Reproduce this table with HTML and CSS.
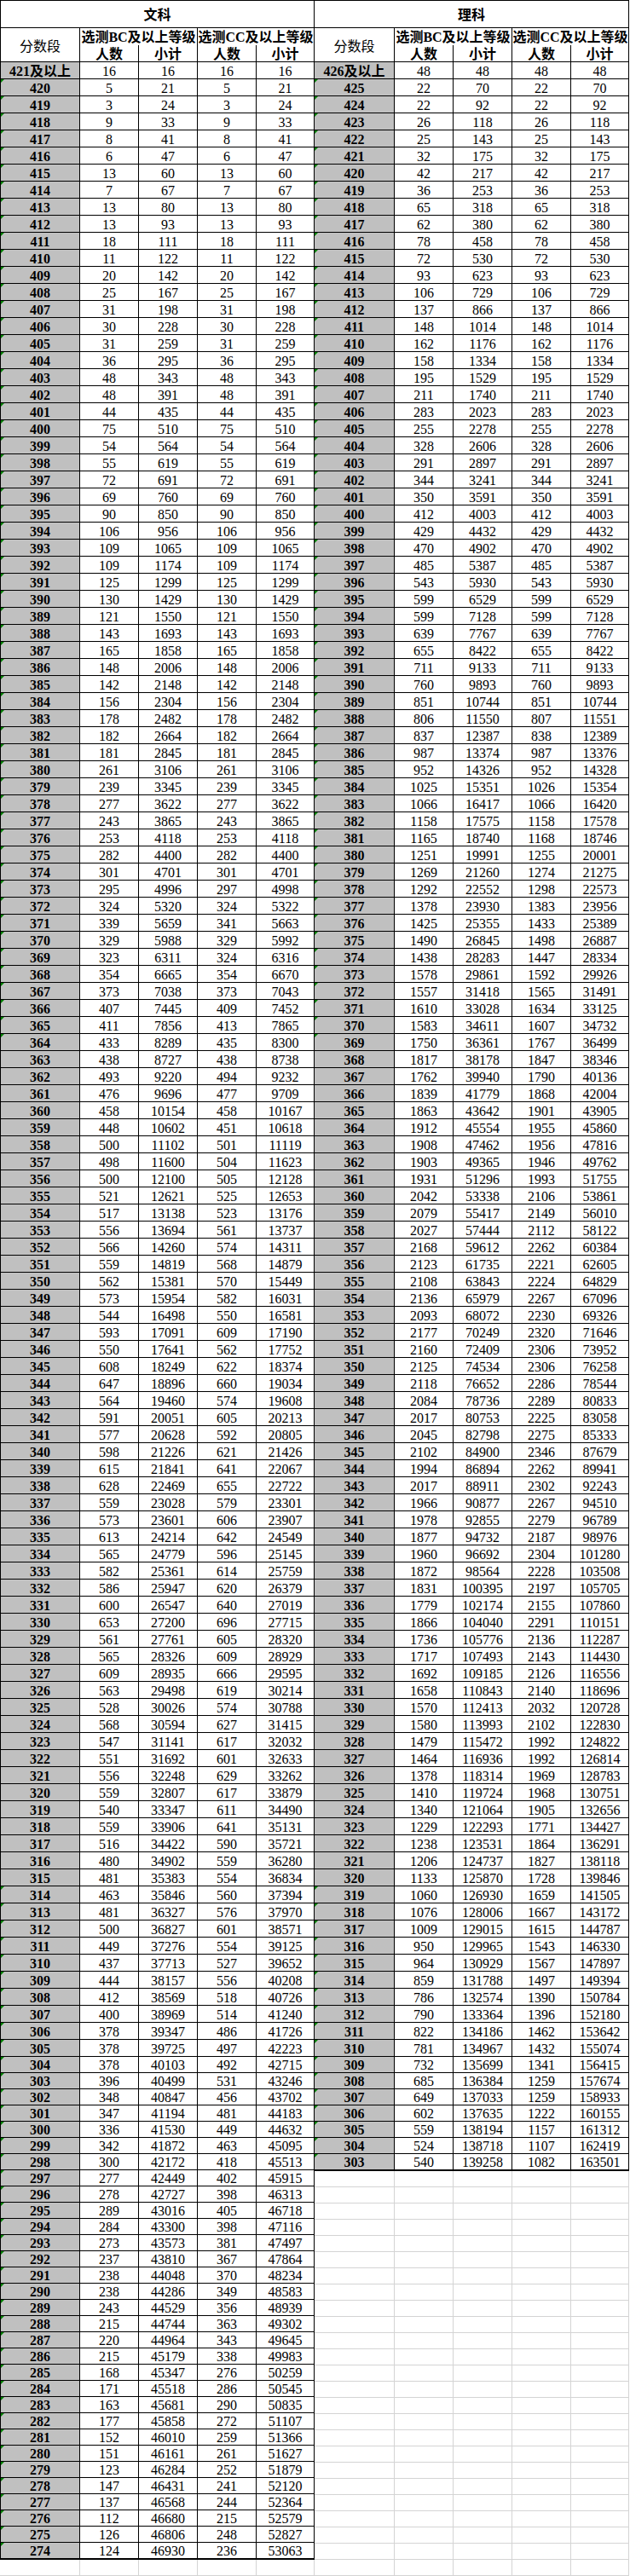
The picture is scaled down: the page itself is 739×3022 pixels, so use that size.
FILE: index.html
```html
<!DOCTYPE html>
<html lang="zh-CN">
<head>
<meta charset="utf-8">
<title>分数段统计</title>
<link rel="stylesheet" href="styles.css">
</head>
<body>
<div class="sheet">
<div class="half">
<table class="tbl tbl-left">
<colgroup><col class="c1"><col class="c2"><col class="c3"><col class="c4"><col class="c5"></colgroup>
<thead>
<tr><th class="title" colspan="5">文科</th></tr>
<tr><th class="seg" rowspan="2">分数段</th><th class="grp" colspan="2">选测BC及以上等级</th><th class="grp" colspan="2">选测CC及以上等级</th></tr>
<tr><th class="sub">人数</th><th class="sub">小计</th><th class="sub">人数</th><th class="sub">小计</th></tr>
</thead>
<tbody>
<tr><td class="l">421及以上</td><td>16</td><td>16</td><td>16</td><td>16</td></tr>
<tr><td class="l t">420</td><td>5</td><td>21</td><td>5</td><td>21</td></tr>
<tr><td class="l t">419</td><td>3</td><td>24</td><td>3</td><td>24</td></tr>
<tr><td class="l t">418</td><td>9</td><td>33</td><td>9</td><td>33</td></tr>
<tr><td class="l t">417</td><td>8</td><td>41</td><td>8</td><td>41</td></tr>
<tr><td class="l t">416</td><td>6</td><td>47</td><td>6</td><td>47</td></tr>
<tr><td class="l t">415</td><td>13</td><td>60</td><td>13</td><td>60</td></tr>
<tr><td class="l t">414</td><td>7</td><td>67</td><td>7</td><td>67</td></tr>
<tr><td class="l t">413</td><td>13</td><td>80</td><td>13</td><td>80</td></tr>
<tr><td class="l t">412</td><td>13</td><td>93</td><td>13</td><td>93</td></tr>
<tr><td class="l t">411</td><td>18</td><td>111</td><td>18</td><td>111</td></tr>
<tr><td class="l t">410</td><td>11</td><td>122</td><td>11</td><td>122</td></tr>
<tr><td class="l t">409</td><td>20</td><td>142</td><td>20</td><td>142</td></tr>
<tr><td class="l t">408</td><td>25</td><td>167</td><td>25</td><td>167</td></tr>
<tr><td class="l t">407</td><td>31</td><td>198</td><td>31</td><td>198</td></tr>
<tr><td class="l t">406</td><td>30</td><td>228</td><td>30</td><td>228</td></tr>
<tr><td class="l t">405</td><td>31</td><td>259</td><td>31</td><td>259</td></tr>
<tr><td class="l t">404</td><td>36</td><td>295</td><td>36</td><td>295</td></tr>
<tr><td class="l t">403</td><td>48</td><td>343</td><td>48</td><td>343</td></tr>
<tr><td class="l t">402</td><td>48</td><td>391</td><td>48</td><td>391</td></tr>
<tr><td class="l t">401</td><td>44</td><td>435</td><td>44</td><td>435</td></tr>
<tr><td class="l t">400</td><td>75</td><td>510</td><td>75</td><td>510</td></tr>
<tr><td class="l t">399</td><td>54</td><td>564</td><td>54</td><td>564</td></tr>
<tr><td class="l t">398</td><td>55</td><td>619</td><td>55</td><td>619</td></tr>
<tr><td class="l t">397</td><td>72</td><td>691</td><td>72</td><td>691</td></tr>
<tr><td class="l t">396</td><td>69</td><td>760</td><td>69</td><td>760</td></tr>
<tr><td class="l t">395</td><td>90</td><td>850</td><td>90</td><td>850</td></tr>
<tr><td class="l t">394</td><td>106</td><td>956</td><td>106</td><td>956</td></tr>
<tr><td class="l t">393</td><td>109</td><td>1065</td><td>109</td><td>1065</td></tr>
<tr><td class="l t">392</td><td>109</td><td>1174</td><td>109</td><td>1174</td></tr>
<tr><td class="l t">391</td><td>125</td><td>1299</td><td>125</td><td>1299</td></tr>
<tr><td class="l t">390</td><td>130</td><td>1429</td><td>130</td><td>1429</td></tr>
<tr><td class="l t">389</td><td>121</td><td>1550</td><td>121</td><td>1550</td></tr>
<tr><td class="l t">388</td><td>143</td><td>1693</td><td>143</td><td>1693</td></tr>
<tr><td class="l t">387</td><td>165</td><td>1858</td><td>165</td><td>1858</td></tr>
<tr><td class="l t">386</td><td>148</td><td>2006</td><td>148</td><td>2006</td></tr>
<tr><td class="l t">385</td><td>142</td><td>2148</td><td>142</td><td>2148</td></tr>
<tr><td class="l t">384</td><td>156</td><td>2304</td><td>156</td><td>2304</td></tr>
<tr><td class="l t">383</td><td>178</td><td>2482</td><td>178</td><td>2482</td></tr>
<tr><td class="l t">382</td><td>182</td><td>2664</td><td>182</td><td>2664</td></tr>
<tr><td class="l t">381</td><td>181</td><td>2845</td><td>181</td><td>2845</td></tr>
<tr><td class="l t">380</td><td>261</td><td>3106</td><td>261</td><td>3106</td></tr>
<tr><td class="l t">379</td><td>239</td><td>3345</td><td>239</td><td>3345</td></tr>
<tr><td class="l t">378</td><td>277</td><td>3622</td><td>277</td><td>3622</td></tr>
<tr><td class="l t">377</td><td>243</td><td>3865</td><td>243</td><td>3865</td></tr>
<tr><td class="l t">376</td><td>253</td><td>4118</td><td>253</td><td>4118</td></tr>
<tr><td class="l t">375</td><td>282</td><td>4400</td><td>282</td><td>4400</td></tr>
<tr><td class="l t">374</td><td>301</td><td>4701</td><td>301</td><td>4701</td></tr>
<tr><td class="l t">373</td><td>295</td><td>4996</td><td>297</td><td>4998</td></tr>
<tr><td class="l t">372</td><td>324</td><td>5320</td><td>324</td><td>5322</td></tr>
<tr><td class="l t">371</td><td>339</td><td>5659</td><td>341</td><td>5663</td></tr>
<tr><td class="l t">370</td><td>329</td><td>5988</td><td>329</td><td>5992</td></tr>
<tr><td class="l t">369</td><td>323</td><td>6311</td><td>324</td><td>6316</td></tr>
<tr><td class="l t">368</td><td>354</td><td>6665</td><td>354</td><td>6670</td></tr>
<tr><td class="l t">367</td><td>373</td><td>7038</td><td>373</td><td>7043</td></tr>
<tr><td class="l t">366</td><td>407</td><td>7445</td><td>409</td><td>7452</td></tr>
<tr><td class="l t">365</td><td>411</td><td>7856</td><td>413</td><td>7865</td></tr>
<tr><td class="l t">364</td><td>433</td><td>8289</td><td>435</td><td>8300</td></tr>
<tr><td class="l">363</td><td>438</td><td>8727</td><td>438</td><td>8738</td></tr>
<tr><td class="l">362</td><td>493</td><td>9220</td><td>494</td><td>9232</td></tr>
<tr><td class="l">361</td><td>476</td><td>9696</td><td>477</td><td>9709</td></tr>
<tr><td class="l">360</td><td>458</td><td>10154</td><td>458</td><td>10167</td></tr>
<tr><td class="l">359</td><td>448</td><td>10602</td><td>451</td><td>10618</td></tr>
<tr><td class="l">358</td><td>500</td><td>11102</td><td>501</td><td>11119</td></tr>
<tr><td class="l">357</td><td>498</td><td>11600</td><td>504</td><td>11623</td></tr>
<tr><td class="l">356</td><td>500</td><td>12100</td><td>505</td><td>12128</td></tr>
<tr><td class="l">355</td><td>521</td><td>12621</td><td>525</td><td>12653</td></tr>
<tr><td class="l">354</td><td>517</td><td>13138</td><td>523</td><td>13176</td></tr>
<tr><td class="l">353</td><td>556</td><td>13694</td><td>561</td><td>13737</td></tr>
<tr><td class="l">352</td><td>566</td><td>14260</td><td>574</td><td>14311</td></tr>
<tr><td class="l">351</td><td>559</td><td>14819</td><td>568</td><td>14879</td></tr>
<tr><td class="l">350</td><td>562</td><td>15381</td><td>570</td><td>15449</td></tr>
<tr><td class="l">349</td><td>573</td><td>15954</td><td>582</td><td>16031</td></tr>
<tr><td class="l">348</td><td>544</td><td>16498</td><td>550</td><td>16581</td></tr>
<tr><td class="l">347</td><td>593</td><td>17091</td><td>609</td><td>17190</td></tr>
<tr><td class="l">346</td><td>550</td><td>17641</td><td>562</td><td>17752</td></tr>
<tr><td class="l">345</td><td>608</td><td>18249</td><td>622</td><td>18374</td></tr>
<tr><td class="l">344</td><td>647</td><td>18896</td><td>660</td><td>19034</td></tr>
<tr><td class="l">343</td><td>564</td><td>19460</td><td>574</td><td>19608</td></tr>
<tr><td class="l">342</td><td>591</td><td>20051</td><td>605</td><td>20213</td></tr>
<tr><td class="l">341</td><td>577</td><td>20628</td><td>592</td><td>20805</td></tr>
<tr><td class="l">340</td><td>598</td><td>21226</td><td>621</td><td>21426</td></tr>
<tr><td class="l">339</td><td>615</td><td>21841</td><td>641</td><td>22067</td></tr>
<tr><td class="l">338</td><td>628</td><td>22469</td><td>655</td><td>22722</td></tr>
<tr><td class="l">337</td><td>559</td><td>23028</td><td>579</td><td>23301</td></tr>
<tr><td class="l">336</td><td>573</td><td>23601</td><td>606</td><td>23907</td></tr>
<tr><td class="l">335</td><td>613</td><td>24214</td><td>642</td><td>24549</td></tr>
<tr><td class="l">334</td><td>565</td><td>24779</td><td>596</td><td>25145</td></tr>
<tr><td class="l">333</td><td>582</td><td>25361</td><td>614</td><td>25759</td></tr>
<tr><td class="l">332</td><td>586</td><td>25947</td><td>620</td><td>26379</td></tr>
<tr><td class="l">331</td><td>600</td><td>26547</td><td>640</td><td>27019</td></tr>
<tr><td class="l">330</td><td>653</td><td>27200</td><td>696</td><td>27715</td></tr>
<tr><td class="l">329</td><td>561</td><td>27761</td><td>605</td><td>28320</td></tr>
<tr><td class="l">328</td><td>565</td><td>28326</td><td>609</td><td>28929</td></tr>
<tr><td class="l">327</td><td>609</td><td>28935</td><td>666</td><td>29595</td></tr>
<tr><td class="l">326</td><td>563</td><td>29498</td><td>619</td><td>30214</td></tr>
<tr><td class="l">325</td><td>528</td><td>30026</td><td>574</td><td>30788</td></tr>
<tr><td class="l">324</td><td>568</td><td>30594</td><td>627</td><td>31415</td></tr>
<tr><td class="l">323</td><td>547</td><td>31141</td><td>617</td><td>32032</td></tr>
<tr><td class="l">322</td><td>551</td><td>31692</td><td>601</td><td>32633</td></tr>
<tr><td class="l">321</td><td>556</td><td>32248</td><td>629</td><td>33262</td></tr>
<tr><td class="l">320</td><td>559</td><td>32807</td><td>617</td><td>33879</td></tr>
<tr><td class="l">319</td><td>540</td><td>33347</td><td>611</td><td>34490</td></tr>
<tr><td class="l">318</td><td>559</td><td>33906</td><td>641</td><td>35131</td></tr>
<tr><td class="l">317</td><td>516</td><td>34422</td><td>590</td><td>35721</td></tr>
<tr><td class="l">316</td><td>480</td><td>34902</td><td>559</td><td>36280</td></tr>
<tr><td class="l">315</td><td>481</td><td>35383</td><td>554</td><td>36834</td></tr>
<tr><td class="l t">314</td><td>463</td><td>35846</td><td>560</td><td>37394</td></tr>
<tr><td class="l t">313</td><td>481</td><td>36327</td><td>576</td><td>37970</td></tr>
<tr><td class="l t">312</td><td>500</td><td>36827</td><td>601</td><td>38571</td></tr>
<tr><td class="l t">311</td><td>449</td><td>37276</td><td>554</td><td>39125</td></tr>
<tr><td class="l t">310</td><td>437</td><td>37713</td><td>527</td><td>39652</td></tr>
<tr><td class="l t">309</td><td>444</td><td>38157</td><td>556</td><td>40208</td></tr>
<tr><td class="l t">308</td><td>412</td><td>38569</td><td>518</td><td>40726</td></tr>
<tr><td class="l t">307</td><td>400</td><td>38969</td><td>514</td><td>41240</td></tr>
<tr><td class="l t">306</td><td>378</td><td>39347</td><td>486</td><td>41726</td></tr>
<tr><td class="l t">305</td><td>378</td><td>39725</td><td>497</td><td>42223</td></tr>
<tr class="s"><td class="l t">304</td><td>378</td><td>40103</td><td>492</td><td>42715</td></tr>
<tr class="s"><td class="l t">303</td><td>396</td><td>40499</td><td>531</td><td>43246</td></tr>
<tr class="s"><td class="l t">302</td><td>348</td><td>40847</td><td>456</td><td>43702</td></tr>
<tr class="s"><td class="l t">301</td><td>347</td><td>41194</td><td>481</td><td>44183</td></tr>
<tr class="s"><td class="l t">300</td><td>336</td><td>41530</td><td>449</td><td>44632</td></tr>
<tr class="s"><td class="l t">299</td><td>342</td><td>41872</td><td>463</td><td>45095</td></tr>
<tr class="s"><td class="l t">298</td><td>300</td><td>42172</td><td>418</td><td>45513</td></tr>
<tr class="s"><td class="l t">297</td><td>277</td><td>42449</td><td>402</td><td>45915</td></tr>
<tr class="s"><td class="l t">296</td><td>278</td><td>42727</td><td>398</td><td>46313</td></tr>
<tr class="s"><td class="l t">295</td><td>289</td><td>43016</td><td>405</td><td>46718</td></tr>
<tr class="s"><td class="l t">294</td><td>284</td><td>43300</td><td>398</td><td>47116</td></tr>
<tr class="s"><td class="l t">293</td><td>273</td><td>43573</td><td>381</td><td>47497</td></tr>
<tr class="s"><td class="l t">292</td><td>237</td><td>43810</td><td>367</td><td>47864</td></tr>
<tr class="s"><td class="l t">291</td><td>238</td><td>44048</td><td>370</td><td>48234</td></tr>
<tr class="s"><td class="l t">290</td><td>238</td><td>44286</td><td>349</td><td>48583</td></tr>
<tr class="s"><td class="l t">289</td><td>243</td><td>44529</td><td>356</td><td>48939</td></tr>
<tr class="s"><td class="l t">288</td><td>215</td><td>44744</td><td>363</td><td>49302</td></tr>
<tr class="s"><td class="l t">287</td><td>220</td><td>44964</td><td>343</td><td>49645</td></tr>
<tr class="s"><td class="l t">286</td><td>215</td><td>45179</td><td>338</td><td>49983</td></tr>
<tr class="s"><td class="l t">285</td><td>168</td><td>45347</td><td>276</td><td>50259</td></tr>
<tr class="s"><td class="l t">284</td><td>171</td><td>45518</td><td>286</td><td>50545</td></tr>
<tr class="s"><td class="l t">283</td><td>163</td><td>45681</td><td>290</td><td>50835</td></tr>
<tr class="s"><td class="l t">282</td><td>177</td><td>45858</td><td>272</td><td>51107</td></tr>
<tr class="s"><td class="l t">281</td><td>152</td><td>46010</td><td>259</td><td>51366</td></tr>
<tr class="s"><td class="l t">280</td><td>151</td><td>46161</td><td>261</td><td>51627</td></tr>
<tr class="s"><td class="l t">279</td><td>123</td><td>46284</td><td>252</td><td>51879</td></tr>
<tr class="s"><td class="l t">278</td><td>147</td><td>46431</td><td>241</td><td>52120</td></tr>
<tr class="s"><td class="l t">277</td><td>137</td><td>46568</td><td>244</td><td>52364</td></tr>
<tr class="s"><td class="l t">276</td><td>112</td><td>46680</td><td>215</td><td>52579</td></tr>
<tr class="s"><td class="l t">275</td><td>126</td><td>46806</td><td>248</td><td>52827</td></tr>
<tr class="e"><td class="l t">274</td><td>124</td><td>46930</td><td>236</td><td>53063</td></tr>
</tbody>
</table>
<div class="blank"></div>
</div>
<div class="half">
<table class="tbl tbl-right">
<colgroup><col class="c1"><col class="c2"><col class="c3"><col class="c4"><col class="c5"></colgroup>
<thead>
<tr><th class="title" colspan="5">理科</th></tr>
<tr><th class="seg" rowspan="2">分数段</th><th class="grp" colspan="2">选测BC及以上等级</th><th class="grp" colspan="2">选测CC及以上等级</th></tr>
<tr><th class="sub">人数</th><th class="sub">小计</th><th class="sub">人数</th><th class="sub">小计</th></tr>
</thead>
<tbody>
<tr><td class="l">426及以上</td><td>48</td><td>48</td><td>48</td><td>48</td></tr>
<tr><td class="l t">425</td><td>22</td><td>70</td><td>22</td><td>70</td></tr>
<tr><td class="l t">424</td><td>22</td><td>92</td><td>22</td><td>92</td></tr>
<tr><td class="l t">423</td><td>26</td><td>118</td><td>26</td><td>118</td></tr>
<tr><td class="l t">422</td><td>25</td><td>143</td><td>25</td><td>143</td></tr>
<tr><td class="l t">421</td><td>32</td><td>175</td><td>32</td><td>175</td></tr>
<tr><td class="l t">420</td><td>42</td><td>217</td><td>42</td><td>217</td></tr>
<tr><td class="l t">419</td><td>36</td><td>253</td><td>36</td><td>253</td></tr>
<tr><td class="l t">418</td><td>65</td><td>318</td><td>65</td><td>318</td></tr>
<tr><td class="l t">417</td><td>62</td><td>380</td><td>62</td><td>380</td></tr>
<tr><td class="l t">416</td><td>78</td><td>458</td><td>78</td><td>458</td></tr>
<tr><td class="l t">415</td><td>72</td><td>530</td><td>72</td><td>530</td></tr>
<tr><td class="l t">414</td><td>93</td><td>623</td><td>93</td><td>623</td></tr>
<tr><td class="l t">413</td><td>106</td><td>729</td><td>106</td><td>729</td></tr>
<tr><td class="l t">412</td><td>137</td><td>866</td><td>137</td><td>866</td></tr>
<tr><td class="l t">411</td><td>148</td><td>1014</td><td>148</td><td>1014</td></tr>
<tr><td class="l t">410</td><td>162</td><td>1176</td><td>162</td><td>1176</td></tr>
<tr><td class="l t">409</td><td>158</td><td>1334</td><td>158</td><td>1334</td></tr>
<tr><td class="l t">408</td><td>195</td><td>1529</td><td>195</td><td>1529</td></tr>
<tr><td class="l t">407</td><td>211</td><td>1740</td><td>211</td><td>1740</td></tr>
<tr><td class="l t">406</td><td>283</td><td>2023</td><td>283</td><td>2023</td></tr>
<tr><td class="l t">405</td><td>255</td><td>2278</td><td>255</td><td>2278</td></tr>
<tr><td class="l t">404</td><td>328</td><td>2606</td><td>328</td><td>2606</td></tr>
<tr><td class="l t">403</td><td>291</td><td>2897</td><td>291</td><td>2897</td></tr>
<tr><td class="l t">402</td><td>344</td><td>3241</td><td>344</td><td>3241</td></tr>
<tr><td class="l t">401</td><td>350</td><td>3591</td><td>350</td><td>3591</td></tr>
<tr><td class="l t">400</td><td>412</td><td>4003</td><td>412</td><td>4003</td></tr>
<tr><td class="l t">399</td><td>429</td><td>4432</td><td>429</td><td>4432</td></tr>
<tr><td class="l t">398</td><td>470</td><td>4902</td><td>470</td><td>4902</td></tr>
<tr><td class="l t">397</td><td>485</td><td>5387</td><td>485</td><td>5387</td></tr>
<tr><td class="l t">396</td><td>543</td><td>5930</td><td>543</td><td>5930</td></tr>
<tr><td class="l t">395</td><td>599</td><td>6529</td><td>599</td><td>6529</td></tr>
<tr><td class="l t">394</td><td>599</td><td>7128</td><td>599</td><td>7128</td></tr>
<tr><td class="l t">393</td><td>639</td><td>7767</td><td>639</td><td>7767</td></tr>
<tr><td class="l t">392</td><td>655</td><td>8422</td><td>655</td><td>8422</td></tr>
<tr><td class="l t">391</td><td>711</td><td>9133</td><td>711</td><td>9133</td></tr>
<tr><td class="l t">390</td><td>760</td><td>9893</td><td>760</td><td>9893</td></tr>
<tr><td class="l t">389</td><td>851</td><td>10744</td><td>851</td><td>10744</td></tr>
<tr><td class="l t">388</td><td>806</td><td>11550</td><td>807</td><td>11551</td></tr>
<tr><td class="l t">387</td><td>837</td><td>12387</td><td>838</td><td>12389</td></tr>
<tr><td class="l t">386</td><td>987</td><td>13374</td><td>987</td><td>13376</td></tr>
<tr><td class="l t">385</td><td>952</td><td>14326</td><td>952</td><td>14328</td></tr>
<tr><td class="l t">384</td><td>1025</td><td>15351</td><td>1026</td><td>15354</td></tr>
<tr><td class="l t">383</td><td>1066</td><td>16417</td><td>1066</td><td>16420</td></tr>
<tr><td class="l t">382</td><td>1158</td><td>17575</td><td>1158</td><td>17578</td></tr>
<tr><td class="l t">381</td><td>1165</td><td>18740</td><td>1168</td><td>18746</td></tr>
<tr><td class="l t">380</td><td>1251</td><td>19991</td><td>1255</td><td>20001</td></tr>
<tr><td class="l t">379</td><td>1269</td><td>21260</td><td>1274</td><td>21275</td></tr>
<tr><td class="l t">378</td><td>1292</td><td>22552</td><td>1298</td><td>22573</td></tr>
<tr><td class="l t">377</td><td>1378</td><td>23930</td><td>1383</td><td>23956</td></tr>
<tr><td class="l t">376</td><td>1425</td><td>25355</td><td>1433</td><td>25389</td></tr>
<tr><td class="l t">375</td><td>1490</td><td>26845</td><td>1498</td><td>26887</td></tr>
<tr><td class="l t">374</td><td>1438</td><td>28283</td><td>1447</td><td>28334</td></tr>
<tr><td class="l t">373</td><td>1578</td><td>29861</td><td>1592</td><td>29926</td></tr>
<tr><td class="l t">372</td><td>1557</td><td>31418</td><td>1565</td><td>31491</td></tr>
<tr><td class="l t">371</td><td>1610</td><td>33028</td><td>1634</td><td>33125</td></tr>
<tr><td class="l t">370</td><td>1583</td><td>34611</td><td>1607</td><td>34732</td></tr>
<tr><td class="l t">369</td><td>1750</td><td>36361</td><td>1767</td><td>36499</td></tr>
<tr><td class="l">368</td><td>1817</td><td>38178</td><td>1847</td><td>38346</td></tr>
<tr><td class="l">367</td><td>1762</td><td>39940</td><td>1790</td><td>40136</td></tr>
<tr><td class="l">366</td><td>1839</td><td>41779</td><td>1868</td><td>42004</td></tr>
<tr><td class="l">365</td><td>1863</td><td>43642</td><td>1901</td><td>43905</td></tr>
<tr><td class="l">364</td><td>1912</td><td>45554</td><td>1955</td><td>45860</td></tr>
<tr><td class="l">363</td><td>1908</td><td>47462</td><td>1956</td><td>47816</td></tr>
<tr><td class="l">362</td><td>1903</td><td>49365</td><td>1946</td><td>49762</td></tr>
<tr><td class="l">361</td><td>1931</td><td>51296</td><td>1993</td><td>51755</td></tr>
<tr><td class="l">360</td><td>2042</td><td>53338</td><td>2106</td><td>53861</td></tr>
<tr><td class="l">359</td><td>2079</td><td>55417</td><td>2149</td><td>56010</td></tr>
<tr><td class="l">358</td><td>2027</td><td>57444</td><td>2112</td><td>58122</td></tr>
<tr><td class="l">357</td><td>2168</td><td>59612</td><td>2262</td><td>60384</td></tr>
<tr><td class="l">356</td><td>2123</td><td>61735</td><td>2221</td><td>62605</td></tr>
<tr><td class="l">355</td><td>2108</td><td>63843</td><td>2224</td><td>64829</td></tr>
<tr><td class="l">354</td><td>2136</td><td>65979</td><td>2267</td><td>67096</td></tr>
<tr><td class="l">353</td><td>2093</td><td>68072</td><td>2230</td><td>69326</td></tr>
<tr><td class="l">352</td><td>2177</td><td>70249</td><td>2320</td><td>71646</td></tr>
<tr><td class="l">351</td><td>2160</td><td>72409</td><td>2306</td><td>73952</td></tr>
<tr><td class="l">350</td><td>2125</td><td>74534</td><td>2306</td><td>76258</td></tr>
<tr><td class="l">349</td><td>2118</td><td>76652</td><td>2286</td><td>78544</td></tr>
<tr><td class="l">348</td><td>2084</td><td>78736</td><td>2289</td><td>80833</td></tr>
<tr><td class="l">347</td><td>2017</td><td>80753</td><td>2225</td><td>83058</td></tr>
<tr><td class="l">346</td><td>2045</td><td>82798</td><td>2275</td><td>85333</td></tr>
<tr><td class="l">345</td><td>2102</td><td>84900</td><td>2346</td><td>87679</td></tr>
<tr><td class="l">344</td><td>1994</td><td>86894</td><td>2262</td><td>89941</td></tr>
<tr><td class="l">343</td><td>2017</td><td>88911</td><td>2302</td><td>92243</td></tr>
<tr><td class="l">342</td><td>1966</td><td>90877</td><td>2267</td><td>94510</td></tr>
<tr><td class="l">341</td><td>1978</td><td>92855</td><td>2279</td><td>96789</td></tr>
<tr><td class="l">340</td><td>1877</td><td>94732</td><td>2187</td><td>98976</td></tr>
<tr><td class="l">339</td><td>1960</td><td>96692</td><td>2304</td><td>101280</td></tr>
<tr><td class="l">338</td><td>1872</td><td>98564</td><td>2228</td><td>103508</td></tr>
<tr><td class="l">337</td><td>1831</td><td>100395</td><td>2197</td><td>105705</td></tr>
<tr><td class="l">336</td><td>1779</td><td>102174</td><td>2155</td><td>107860</td></tr>
<tr><td class="l">335</td><td>1866</td><td>104040</td><td>2291</td><td>110151</td></tr>
<tr><td class="l">334</td><td>1736</td><td>105776</td><td>2136</td><td>112287</td></tr>
<tr><td class="l">333</td><td>1717</td><td>107493</td><td>2143</td><td>114430</td></tr>
<tr><td class="l">332</td><td>1692</td><td>109185</td><td>2126</td><td>116556</td></tr>
<tr><td class="l">331</td><td>1658</td><td>110843</td><td>2140</td><td>118696</td></tr>
<tr><td class="l">330</td><td>1570</td><td>112413</td><td>2032</td><td>120728</td></tr>
<tr><td class="l">329</td><td>1580</td><td>113993</td><td>2102</td><td>122830</td></tr>
<tr><td class="l">328</td><td>1479</td><td>115472</td><td>1992</td><td>124822</td></tr>
<tr><td class="l">327</td><td>1464</td><td>116936</td><td>1992</td><td>126814</td></tr>
<tr><td class="l">326</td><td>1378</td><td>118314</td><td>1969</td><td>128783</td></tr>
<tr><td class="l">325</td><td>1410</td><td>119724</td><td>1968</td><td>130751</td></tr>
<tr><td class="l">324</td><td>1340</td><td>121064</td><td>1905</td><td>132656</td></tr>
<tr><td class="l">323</td><td>1229</td><td>122293</td><td>1771</td><td>134427</td></tr>
<tr><td class="l">322</td><td>1238</td><td>123531</td><td>1864</td><td>136291</td></tr>
<tr><td class="l">321</td><td>1206</td><td>124737</td><td>1827</td><td>138118</td></tr>
<tr><td class="l">320</td><td>1133</td><td>125870</td><td>1728</td><td>139846</td></tr>
<tr><td class="l t">319</td><td>1060</td><td>126930</td><td>1659</td><td>141505</td></tr>
<tr><td class="l t">318</td><td>1076</td><td>128006</td><td>1667</td><td>143172</td></tr>
<tr><td class="l t">317</td><td>1009</td><td>129015</td><td>1615</td><td>144787</td></tr>
<tr><td class="l t">316</td><td>950</td><td>129965</td><td>1543</td><td>146330</td></tr>
<tr><td class="l t">315</td><td>964</td><td>130929</td><td>1567</td><td>147897</td></tr>
<tr><td class="l t">314</td><td>859</td><td>131788</td><td>1497</td><td>149394</td></tr>
<tr><td class="l t">313</td><td>786</td><td>132574</td><td>1390</td><td>150784</td></tr>
<tr><td class="l t">312</td><td>790</td><td>133364</td><td>1396</td><td>152180</td></tr>
<tr><td class="l t">311</td><td>822</td><td>134186</td><td>1462</td><td>153642</td></tr>
<tr><td class="l t">310</td><td>781</td><td>134967</td><td>1432</td><td>155074</td></tr>
<tr class="s"><td class="l t">309</td><td>732</td><td>135699</td><td>1341</td><td>156415</td></tr>
<tr class="s"><td class="l t">308</td><td>685</td><td>136384</td><td>1259</td><td>157674</td></tr>
<tr class="s"><td class="l t">307</td><td>649</td><td>137033</td><td>1259</td><td>158933</td></tr>
<tr class="s"><td class="l t">306</td><td>602</td><td>137635</td><td>1222</td><td>160155</td></tr>
<tr class="s"><td class="l t">305</td><td>559</td><td>138194</td><td>1157</td><td>161312</td></tr>
<tr class="s"><td class="l t">304</td><td>524</td><td>138718</td><td>1107</td><td>162419</td></tr>
<tr class="e"><td class="l t">303</td><td>540</td><td>139258</td><td>1082</td><td>163501</td></tr>
</tbody>
</table>
<div class="blank"></div>
</div>
</div>
</body>
</html>
```

FILE: styles.css
```css
html, body {
  margin: 0;
  padding: 0;
  background: #ffffff;
}

.sheet {
  display: flex;
  align-items: stretch;
  width: 739px;
  height: 3022px;
  overflow: hidden;
  font-family: "Liberation Serif", "Noto Sans CJK SC", serif;
  font-size: 16px;
  color: #000000;
}

.half {
  display: flex;
  flex-direction: column;
  flex: none;
  width: 369px;
}

.tbl {
  box-sizing: border-box;
  width: 369px;
  table-layout: fixed;
  border-collapse: separate;
  border-spacing: 0;
  border-top: 1px solid #000000;
  flex: none;
}

.tbl-left {
  border-left: 1px solid #000000;
}

.tbl .c1 { width: 93px; }
.tbl .c2 { width: 69px; }
.tbl .c3 { width: 69px; }
.tbl .c4 { width: 69px; }
.tbl .c5 { width: 68px; }
.tbl-right .c1 { width: 94px; }

.tbl th,
.tbl td {
  box-sizing: border-box;
  height: 20px;
  padding: 4px 0 0;
  line-height: 14px;
  vertical-align: top;
  text-align: center;
  white-space: nowrap;
  overflow: hidden;
  font-weight: normal;
  border-right: 1px solid #000000;
  border-bottom: 1px solid #000000;
}

.tbl th.title {
  height: 32px;
  padding-top: 7px;
  line-height: 20px;
  font-weight: bold;
}

.tbl th.seg {
  height: auto;
  vertical-align: middle;
}

.tbl th.grp {
  border-bottom: none;
  font-weight: bold;
}

.tbl th.sub {
  font-weight: bold;
}

.tbl tr.s td {
  height: 19px;
  padding-top: 3px;
}

.tbl tr.e td {
  height: 20px;
  padding-top: 3px;
  border-bottom-width: 2px;
}

.tbl td.l {
  position: relative;
  background: #c0c0c0;
  font-weight: bold;
}

.tbl td.t::before {
  content: "";
  position: absolute;
  top: 0;
  left: 0;
  width: 0;
  height: 0;
  border-top: 4px solid #008000;
  border-right: 4px solid transparent;
}

.blank {
  flex: 1;
  background:
    linear-gradient(#d4d4d4, #d4d4d4) 93px 0 / 1px 100% no-repeat,
    linear-gradient(#d4d4d4, #d4d4d4) 162px 0 / 1px 100% no-repeat,
    linear-gradient(#d4d4d4, #d4d4d4) 231px 0 / 1px 100% no-repeat,
    linear-gradient(#d4d4d4, #d4d4d4) 300px 0 / 1px 100% no-repeat,
    linear-gradient(#d4d4d4, #d4d4d4) 368px 0 / 1px 100% no-repeat,
    repeating-linear-gradient(to bottom, transparent 0, transparent 18px, #d4d4d4 18px, #d4d4d4 19px);
}
```
